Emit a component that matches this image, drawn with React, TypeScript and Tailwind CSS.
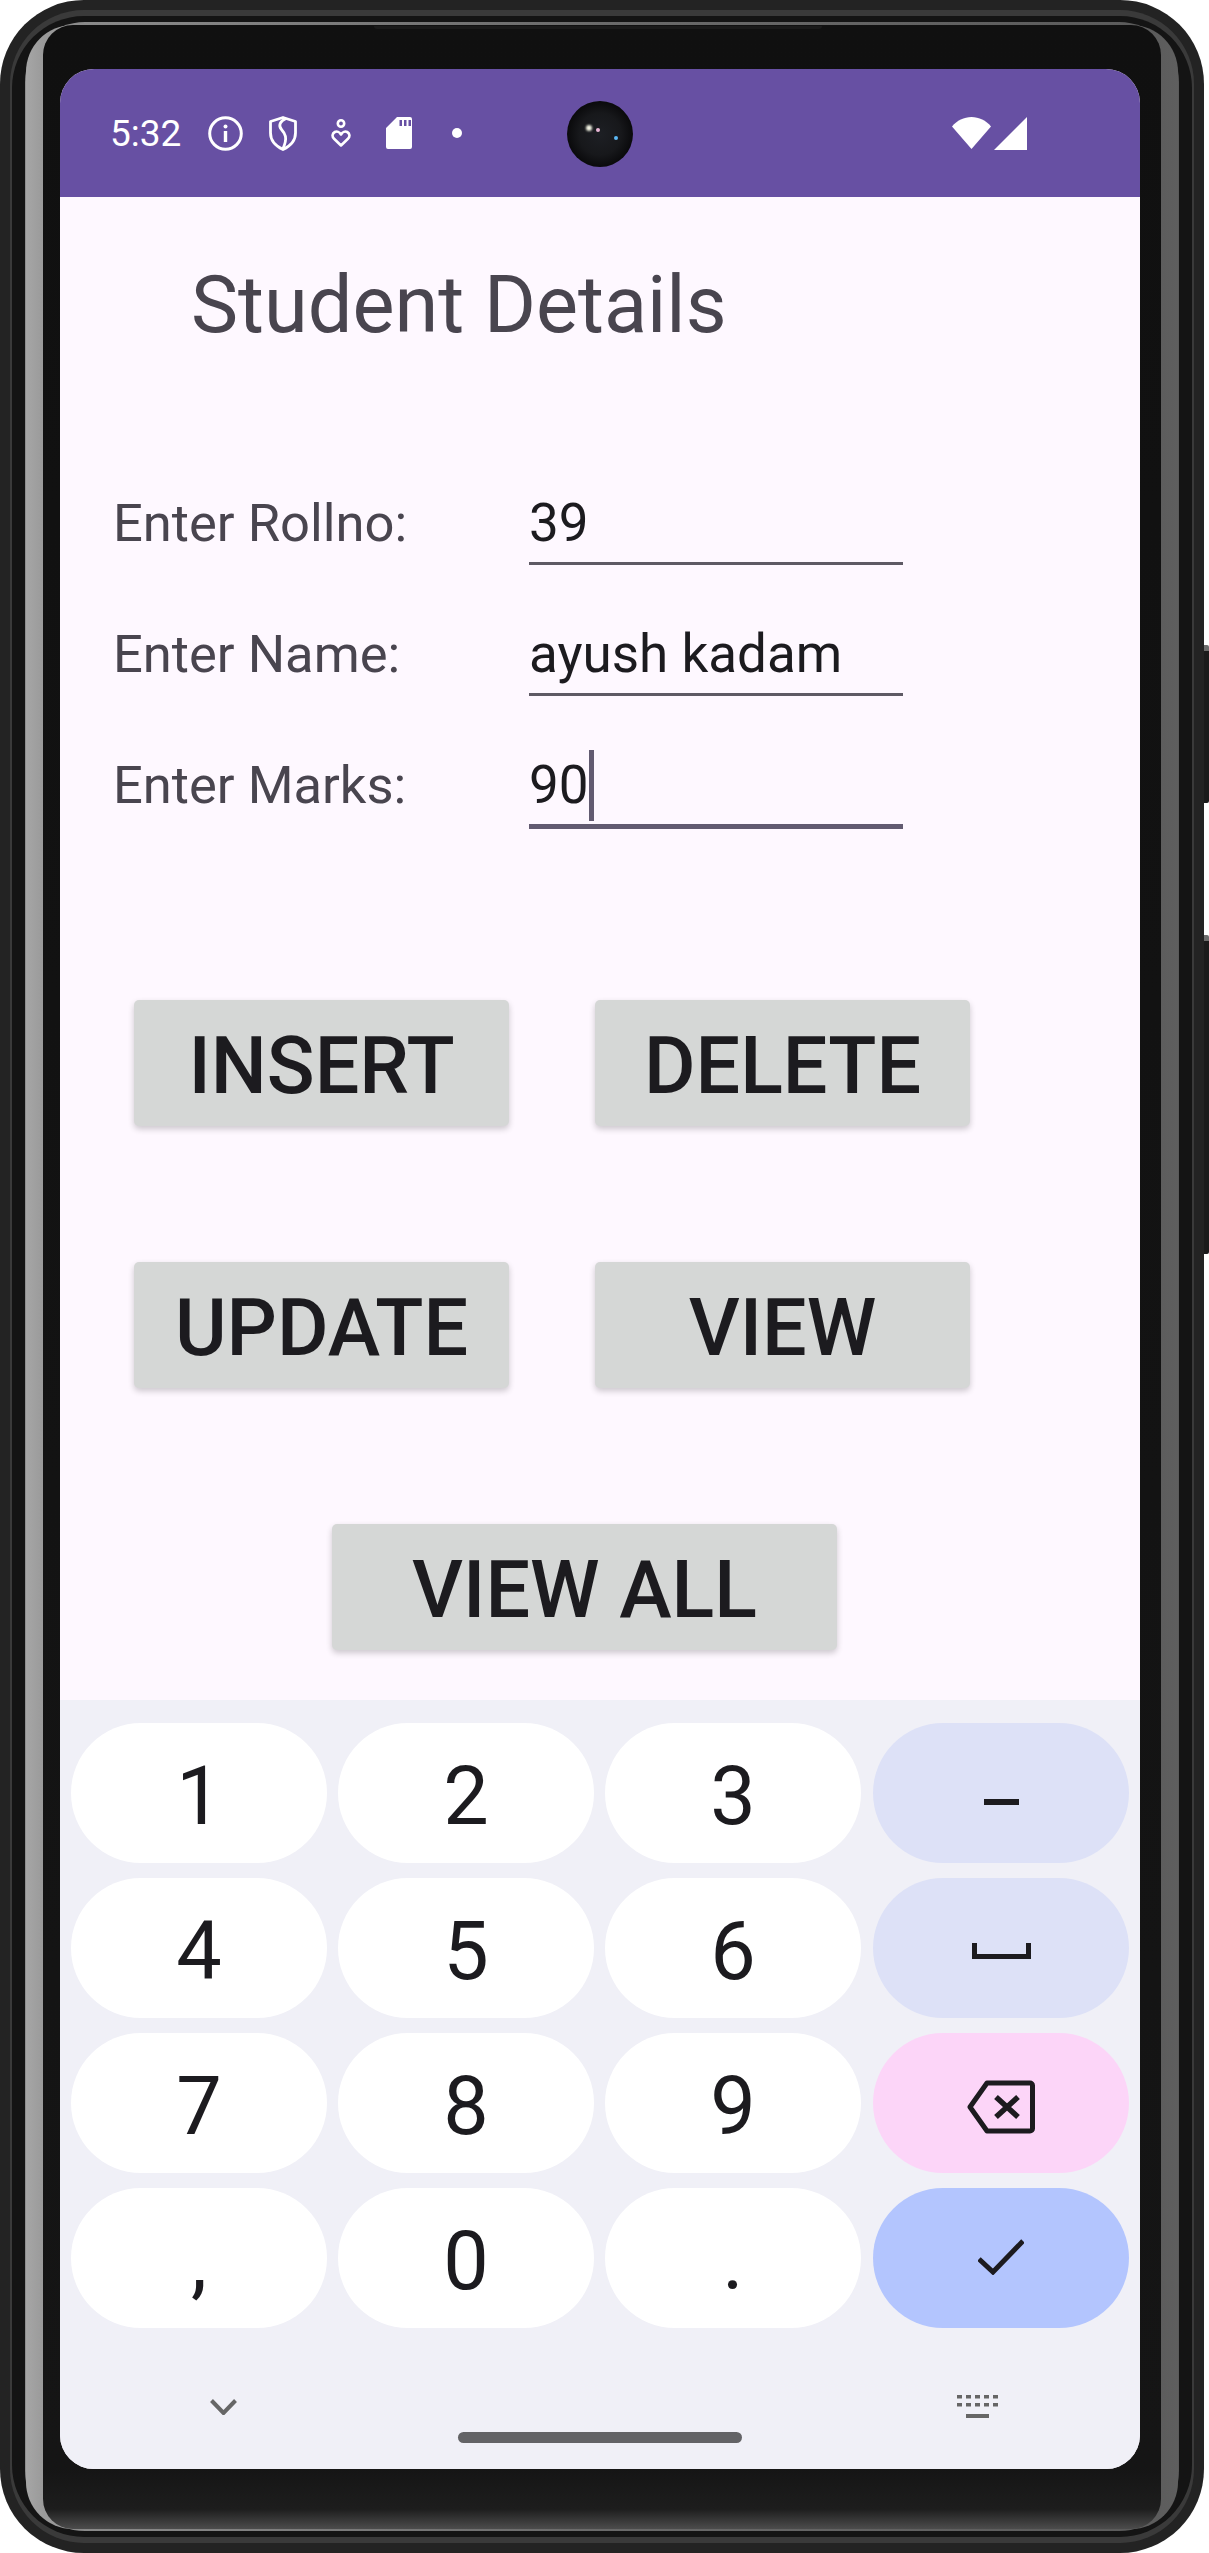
const fontRoboto = "font-['Roboto',sans-serif]";

const keyRows = [
  ['1', '2', '3'],
  ['4', '5', '6'],
  ['7', '8', '9'],
  [',', '0', '.'],
];

function InfoIcon() {
  return (
    <svg width="35" height="35" viewBox="0 0 35 35" fill="none" stroke="#fff">
      <circle cx="17.5" cy="17.5" r="15.8" strokeWidth="3" />
      <path d="M17.5 15v11" strokeWidth="3.4" />
      <circle cx="17.5" cy="10.5" r="2" fill="#fff" stroke="none" />
    </svg>
  );
}

function ShieldIcon() {
  return (
    <svg width="28" height="35" viewBox="0 0 28 35" fill="none" stroke="#fff" strokeWidth="2.8">
      <path d="M14 1.5 26.5 5.5V17c0 7.5-5 13-12.5 16.5C6.500 30 1.500 24.500 1.500 17V5.500Z" strokeLinejoin="round" />
      <path d="M17 2.500c-6 2.500-8 7-4.500 11s6.500 8 1.500 19" />
    </svg>
  );
}

function HeartPersonIcon() {
  return (
    <svg width="20" height="28" viewBox="0 0 20 28" fill="none" stroke="#fff" strokeWidth="2.600">
      <circle cx="10" cy="4.500" r="3.200" />
      <path d="M10 15.500C8.500 12.800 5.800 12 3.800 13 1 14.500 1 17.500 2.800 19.500L10 26.500l7.200-7c1.800-2 1.800-5-1-6.500-2-1-4.700-.2-6.200 2.500Z" strokeLinejoin="round" />
    </svg>
  );
}

function SdCardIcon() {
  return (
    <svg width="26" height="32" viewBox="0 0 26 32">
      <path
        fill="#fff"
        fillRule="evenodd"
        d="M11 0h13a2 2 0 0 1 2 2v28a2 2 0 0 1-2 2H2a2 2 0 0 1-2-2V11ZM13.500 3v6h2.500V3Zm4.500 0v6h2.500V3Zm4.500 0v6H25V3Z"
      />
    </svg>
  );
}

function WifiIcon() {
  return (
    <svg width="39" height="32" viewBox="0 0 39 32">
      <path fill="#fff" d="M19.500 32 0 9.500C5 3.500 12 0 19.500 0S34 3.500 39 9.500Z" />
    </svg>
  );
}

function SignalIcon() {
  return (
    <svg width="33" height="33" viewBox="0 0 33 33">
      <path fill="#fff" d="M33 0v33H0Z" />
    </svg>
  );
}

function StatusBar() {
  return (
    <div className="flex h-[128px] shrink-0 items-center bg-[#6750a3] pl-[50px] pr-[113px] text-white">
      <span className={`${fontRoboto} w-[98px] text-[37px] font-normal leading-none`}>5:32</span>
      <div className="flex items-center">
        <InfoIcon />
        <div className="ml-[26px]">
          <ShieldIcon />
        </div>
        <div className="ml-[34px]">
          <HeartPersonIcon />
        </div>
        <div className="ml-[35px]">
          <SdCardIcon />
        </div>
        <div className="ml-[40px] h-[10px] w-[10px] rounded-full bg-white" />
      </div>
      <div className="ml-auto flex items-center gap-[3px]">
        <WifiIcon />
        <SignalIcon />
      </div>
    </div>
  );
}

function FormRow({ label, value, focused }: { label: string; value: string; focused?: boolean }) {
  return (
    <div className="flex items-end">
      <span className={`w-[416px] text-[52.5px] leading-[62px] text-[#49454f] ${focused ? 'pb-[13px]' : 'pb-[11px]'}`}>
        {label}
      </span>
      <div
        className={`flex w-[374px] items-center pb-[8px] text-[53px] leading-[62px] text-[#1c1b1f] ${
          focused ? 'border-b-[5px] border-[#625b71]' : 'border-b-[3px] border-[#5e5a64]'
        }`}
      >
        <span>{value}</span>
        {focused && <div className="-my-[5px] h-[71px] w-[5px] bg-[#625b71]" />}
      </div>
    </div>
  );
}

function ActionButton({ label, wide }: { label: string; wide?: boolean }) {
  return (
    <button
      className={`flex h-[126px] items-center justify-center rounded-[5px] bg-[#d5d7d6] pt-[6px] text-[79px] font-medium leading-none text-[#1c1b1f] shadow-[0_3px_6px_rgba(0,0,0,0.2)] ${
        wide ? 'w-[505px]' : 'w-[375px]'
      }`}
    >
      {label}
    </button>
  );
}

function NumKey({ label }: { label: string }) {
  return (
    <div className="flex h-[140px] w-[256px] items-center justify-center rounded-full bg-white pt-[7px] text-[81px] font-normal leading-none text-[#1c1b1f]">
      {label}
    </div>
  );
}

function SideKey({ color, children }: { color: string; children: React.ReactNode }) {
  return (
    <div className={`flex h-[140px] w-[256px] items-center justify-center rounded-full ${color}`}>{children}</div>
  );
}

function Keyboard() {
  return (
    <div className="flex flex-1 flex-col bg-[#f0f0f7]">
      <div className="flex justify-between pl-[11px] pr-[11px] pt-[23px]">
        <div className="flex flex-col gap-[15px]">
          {keyRows.map((row) => (
            <div key={row[0]} className="flex gap-[11px]">
              {row.map((k) => (
                <NumKey key={k} label={k} />
              ))}
            </div>
          ))}
        </div>
        <div className="flex flex-col gap-[15px]">
          <SideKey color="bg-[#dde1f7]">
            <svg width="35" height="6" viewBox="0 0 35 6" className="mt-[17px]">
              <rect width="35" height="6" fill="#1c1b1f" />
            </svg>
          </SideKey>
          <SideKey color="bg-[#dde1f7]">
            <svg width="59" height="16" viewBox="0 0 59 16" className="mt-[6px]">
              <path d="M0 0h5v11h49V0h5v16H0Z" fill="#1c1b1f" />
            </svg>
          </SideKey>
          <SideKey color="bg-[#fcd5f8]">
            <svg width="68" height="54" viewBox="0 0 68 54" fill="none" stroke="#1c1b1f" strokeWidth="5" className="mt-[8px]">
              <path d="M3 27 20 3h43a2.500 2.500 0 0 1 2.500 2.500v43A2.500 2.500 0 0 1 63 51H20Z" strokeLinejoin="round" />
              <path d="M29 17l22 20M51 17 29 37" strokeWidth="5.500" />
            </svg>
          </SideKey>
          <SideKey color="bg-[#b3c5fe]">
            <svg width="46" height="36" viewBox="0 0 46 36" fill="none" stroke="#1c1b1f" strokeWidth="5" className="mt-[-2px]">
              <path d="M1 20l14 13L45 2" />
            </svg>
          </SideKey>
        </div>
      </div>
      <div className="flex items-start justify-between pl-[150px] pr-[142px] pt-[71px]">
        <svg width="27" height="16" viewBox="0 0 27 16" fill="none" stroke="#666" strokeWidth="4">
          <path d="M1.500 1.500 13.500 14 25.500 1.500" />
        </svg>
        <div className="ml-[6px] mt-[33px] h-[11px] w-[284px] rounded-full bg-[#636366]" />
        <svg width="41" height="23" viewBox="0 0 41 23" fill="#666" className="-mt-[4px]">
          <rect x="0" y="0" width="5" height="3.500" />
          <rect x="9" y="0" width="5" height="3.500" />
          <rect x="18" y="0" width="5" height="3.500" />
          <rect x="27" y="0" width="5" height="3.500" />
          <rect x="36" y="0" width="5" height="3.500" />
          <rect x="0" y="8" width="5" height="3.500" />
          <rect x="9" y="8" width="5" height="3.500" />
          <rect x="18" y="8" width="5" height="3.500" />
          <rect x="27" y="8" width="5" height="3.500" />
          <rect x="36" y="8" width="5" height="3.500" />
          <rect x="9" y="19" width="23" height="4" />
        </svg>
      </div>
    </div>
  );
}

function Screen() {
  return (
    <div className={`relative flex h-[2400px] w-[1080px] flex-col overflow-hidden rounded-[34px] bg-[#fef8ff] ${fontRoboto}`}>
      <StatusBar />
      <div className="flex h-[1503px] shrink-0 flex-col">
        <h1 className="pl-[131px] pt-[58px] text-[79.3px] font-normal leading-[100px] text-[#49454f]">Student Details</h1>
        <div className="mt-[137px] flex flex-col gap-[58px] pl-[53px]">
          <FormRow label="Enter Rollno:" value="39" />
          <FormRow label="Enter Name:" value="ayush kadam" />
          <FormRow label="Enter Marks:" value="90" focused />
        </div>
        <div className="mt-[171px] flex gap-[86px] pl-[74px]">
          <ActionButton label="INSERT" />
          <ActionButton label="DELETE" />
        </div>
        <div className="mt-[136px] flex gap-[86px] pl-[74px]">
          <ActionButton label="UPDATE" />
          <ActionButton label="VIEW" />
        </div>
        <div className="mt-[136px] pl-[272px]">
          <ActionButton label="VIEW ALL" wide />
        </div>
      </div>
      <Keyboard />
      {/* punch-hole camera */}
      <div className="absolute left-[507px] top-[32px] h-[66px] w-[66px] rounded-full bg-[radial-gradient(circle_at_50%_50%,#1d1f24_0%,#17181b_45%,#0a0a0c_70%,#000_100%)]">
        <div className="absolute left-[19px] top-[24px] h-[6px] w-[6px] rounded-full bg-[#f4f6e6] blur-[1px]" />
        <div className="absolute left-[29px] top-[27px] h-[4px] w-[4px] rounded-full bg-[#e9b7d6] blur-[0.5px]" />
        <div className="absolute left-[47px] top-[35px] h-[4px] w-[4px] rounded-full bg-[#5cb8f5] blur-[0.5px]" />
      </div>
    </div>
  );
}

export default function App() {
  return (
    <div className="relative h-[2553px] w-[1209px] overflow-hidden bg-white">
      {/* side buttons */}
      <div className="absolute right-0 top-[645px] h-[158px] w-[10px] rounded-r-[2px] border-t-[6px] border-[#6e6e6e] bg-[#1b1b1b]" />
      <div className="absolute right-0 top-[935px] h-[319px] w-[10px] rounded-r-[2px] border-t-[6px] border-[#6e6e6e] bg-[#1b1b1b]" />
      {/* phone body */}
      <div className="relative h-[2553px] w-[1204px] rounded-[84px] bg-[#232323] p-[10px]">
        <div className="h-full rounded-[74px] bg-[#3a3a3a] px-[2px] pb-[6px] pt-[6px]">
          <div className="h-full rounded-[72px] bg-[#141414] px-[13px] pb-[6px] pt-[6px]">
            <div className="h-full rounded-[60px] bg-[linear-gradient(to_right,#8e8e8e,#6a6a6a_50%,#5a5a5a)] px-[1px] pb-[2px] pt-[3px]">
              <div className="h-full rounded-[47px] bg-[linear-gradient(to_right,#a6a6a6,#9a9a9a_1.500%,#5c5c5c_98%,#5f5f5f)] px-[17px]">
                <div className="flex h-full justify-start rounded-[30px] bg-[linear-gradient(to_bottom,#101010_0%,#151515_97.600%,#1d1d1d_99.200%,#4c4c4c_100%)] pl-[17px] pt-[44px]">
                  <Screen />
                </div>
              </div>
            </div>
          </div>
        </div>
        {/* earpiece slit */}
        <div className="absolute left-[374px] top-[26px] h-[3px] w-[448px] rounded-b-[3px] bg-[#1a1a1a]" />
      </div>
    </div>
  );
}
